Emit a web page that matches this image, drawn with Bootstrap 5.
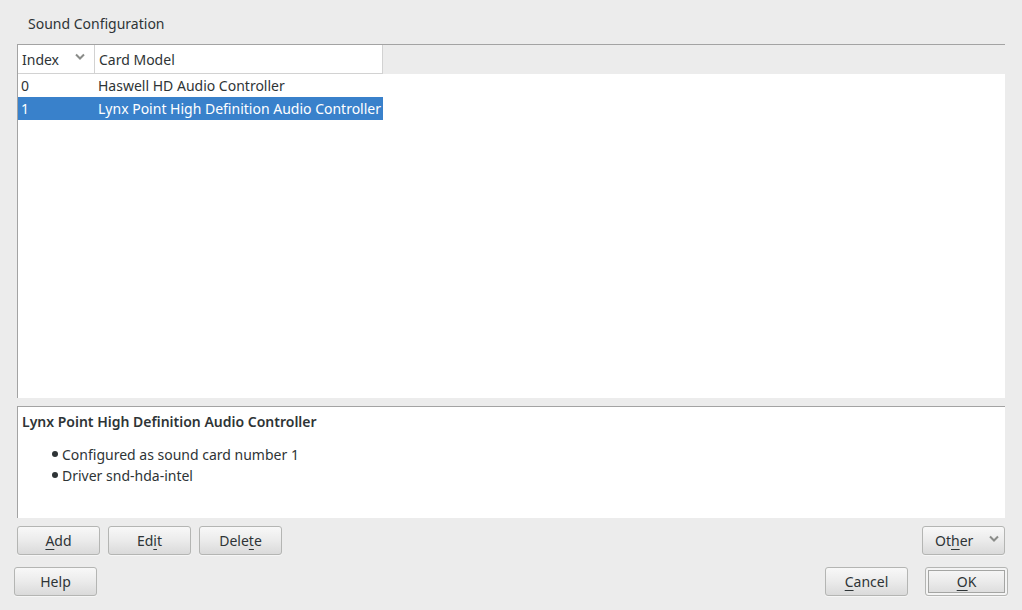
<!DOCTYPE html>
<html lang="en">
<head>
<meta charset="utf-8">
<meta name="viewport" content="width=device-width, initial-scale=1">
<title>Sound Configuration</title>
<link rel="stylesheet" href="https://cdn.jsdelivr.net/npm/bootstrap@5.3.0/dist/css/bootstrap.min.css">
<style>
  body {
    background: #ececec;
    color: #2e3436;
    font-family: "Noto Sans", "Open Sans", sans-serif;
    font-size: 14px;
    line-height: 21px;
  }
  .dialog-main { padding: 0 17px; }
  .dialog-title { font-size: 14px; line-height: 21px; font-weight: 400; margin: 0; padding: 13px 11px 10px; }
  .panel { background: #fff; border: solid #a3a3a3; border-width: 1px 0 0 1px; }
  .panel-head { background: #ececec; }
  .cards { border-collapse: separate; border-spacing: 0; table-layout: fixed; }
  .cards th { height: 29px; padding: 0 4px; font-weight: 400; background: #fff; border: solid #d2d2d2; border-width: 0 1px 1px 0; }
  .cards td { height: 23px; padding: 0 0 0 3px; white-space: nowrap; }
  .cards tbody { background: #fff; }
  .cards .index-col { width: 77px; }
  .cards .model-col { width: 288px; }
  .cards .selected td:not(:empty) { background: #3981cb; color: #fff; }
  .details { height: 112px; padding: 4px; }
  .details h2 { font-size: 14px; line-height: 21px; font-weight: 600; margin: 0 0 12px; }
  .details li { gap: 4px; }
  .details li::before { content: ""; width: 6px; height: 6px; border-radius: 50%; background: #2e3436; margin-bottom: 2px; }
  .details ul { padding-left: 30px; }
  .dlg-btn {
    --bs-btn-color: #2e3436;
    --bs-btn-hover-color: #2e3436;
    --bs-btn-border-color: #b4b5b3;
    --bs-btn-hover-border-color: #9a9b99;
    --bs-btn-font-size: 14px;
    --bs-btn-line-height: 21px;
    --bs-btn-padding-x: 0;
    --bs-btn-padding-y: 3px;
    --bs-btn-border-radius: 3px;
    width: 83px;
    background: linear-gradient(#f8f8f8, #ebebeb 50%, #dadada);
    box-shadow: 0 1px 0 #f6f6f6;
  }
  .dlg-btn u { text-decoration-thickness: 1px; text-underline-offset: 3px; }
  .dlg-btn-default { outline: 1px solid #a4a5a3; outline-offset: -4px; box-shadow: inset 0 0 0 2px #f4f4f4, 0 1px 0 #f6f6f6; }
  .dlg-footer { padding: 12px 14px 14px; gap: 17px; }
</style>
</head>
<body>
<div class="d-flex flex-column min-vh-100">
  <main class="dialog-main d-flex flex-column flex-grow-1">
    <h1 class="dialog-title">Sound Configuration</h1>
    <section class="panel flex-grow-1" aria-label="Sound cards">
      <div class="panel-head">
        <table class="cards w-100">
          <thead>
            <tr>
              <th class="index-col" scope="col">
                <span class="d-flex justify-content-between align-items-center pe-1">Index
                  <svg class="mb-1" width="12" height="8" viewBox="0 0 12 8" aria-hidden="true"><path d="M2 1.500 6 5.500l4-4" fill="none" stroke="#8a8c89" stroke-width="2"/></svg>
                </span>
              </th>
              <th class="model-col" scope="col">Card Model</th>
              <td></td>
            </tr>
          </thead>
          <tbody>
            <tr><td>0</td><td>Haswell HD Audio Controller</td><td></td></tr>
            <tr class="selected"><td>1</td><td>Lynx Point High Definition Audio Controller</td><td></td></tr>
          </tbody>
        </table>
      </div>
    </section>
    <section class="panel details mt-2">
      <h2>Lynx Point High Definition Audio Controller</h2>
      <ul class="list-unstyled m-0">
        <li class="d-flex align-items-center">Configured as sound card number 1</li>
        <li class="d-flex align-items-center">Driver snd-hda-intel</li>
      </ul>
    </section>
    <div class="d-flex gap-2 mt-2">
      <button type="button" class="btn dlg-btn"><u>A</u>dd</button>
      <button type="button" class="btn dlg-btn">Ed<u>i</u>t</button>
      <button type="button" class="btn dlg-btn">Dele<u>t</u>e</button>
      <button type="button" class="btn dlg-btn ms-auto d-flex justify-content-between align-items-center ps-2 pe-1" aria-haspopup="menu">
        <span class="ps-1">Ot<u>h</u>er</span>
        <svg class="mb-1" width="12" height="8" viewBox="0 0 12 8" aria-hidden="true"><path d="M2 1.500 6 5.500l4-4" fill="none" stroke="#8a8c89" stroke-width="2"/></svg>
      </button>
    </div>
  </main>
  <footer class="dlg-footer d-flex">
    <button type="button" class="btn dlg-btn">Help</button>
    <button type="button" class="btn dlg-btn ms-auto"><u>C</u>ancel</button>
    <button type="submit" class="btn dlg-btn dlg-btn-default"><u>O</u>K</button>
  </footer>
</div>
<script src="https://cdn.jsdelivr.net/npm/bootstrap@5.3.0/dist/js/bootstrap.bundle.min.js"></script>
</body>
</html>
